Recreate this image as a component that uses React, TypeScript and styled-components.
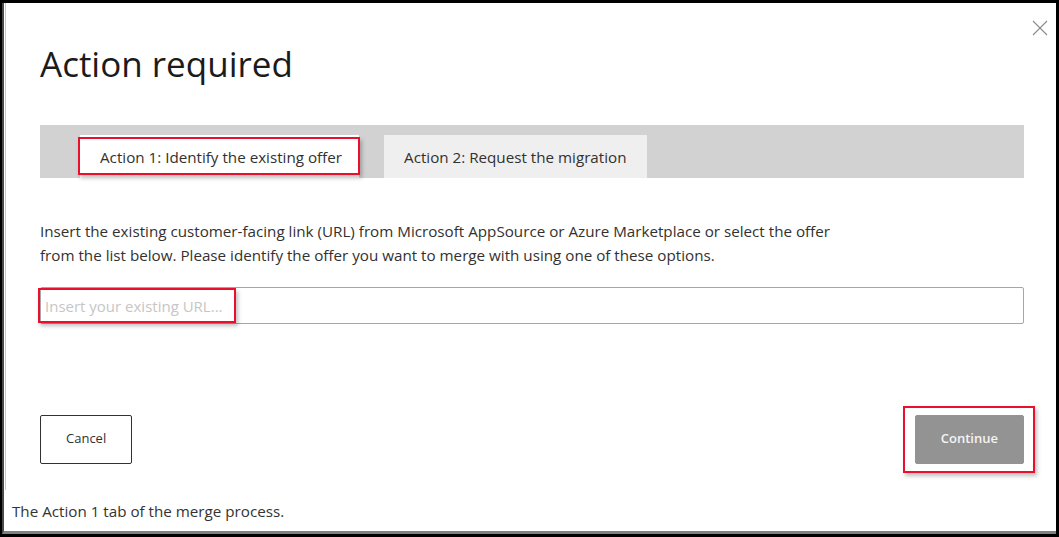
import React from "react";
import styled, { createGlobalStyle } from "styled-components";

const GlobalStyle = createGlobalStyle`
  html, body {
    margin: 0;
    padding: 0;
    background: #fff;
  }

  body {
    font-family: "Open Sans", "Noto Sans", "Liberation Sans", sans-serif;
    color: #323130;
  }
`;

const Frame = styled.div`
  width: 1059px;
  height: 537px;
  box-sizing: border-box;

  display: flex;

  border-style: solid;
  border-color: #000;
  border-width: 3px 3px 3px 2px;
  background: #fff;
  overflow: hidden;
`;

const Sheet = styled.div`
  flex: 1;

  display: flex;
  flex-direction: column;

  border-left: 2px solid #4a4a4a;
  border-bottom: 3px solid #808080;
`;

const Dialog = styled.section`
  position: relative;
  height: 487px;
  box-sizing: border-box;

  display: flex;
  flex-direction: column;

  margin-left: 1px;
  padding: 0 32px 26px 34px;

  border-left: 1px solid #cacaca;
`;

const CloseButton = styled.button`
  position: absolute;
  top: 17px;
  right: 8px;

  width: 16px;
  height: 16px;
  padding: 0;

  display: flex;

  border: none;
  background: none;
  color: #8a8a8a;
`;

const Title = styled.h1`
  margin: 39px 0 0;

  font-size: 35px;
  font-weight: 400;
  line-height: 44px;
  color: #1b1b1b;
`;

const TabBand = styled.div`
  height: 53px;
  box-sizing: border-box;

  display: flex;
  align-items: flex-end;
  gap: 25px;

  margin-top: 39px;
  padding-left: 40px;

  background: #d2d2d2;
`;

const Tab = styled.div<{ $active?: boolean }>`
  position: relative;
  height: 43px;
  box-sizing: border-box;

  display: flex;
  align-items: center;

  padding: 0 ${(p) => (p.$active ? "17px" : "20px")} 0 20px;

  font-size: 15.2px;
  color: #323130;
  background: ${(p) => (p.$active ? "#fff" : "#efefef")};
`;

const Highlight = styled.span<{
  $top: number;
  $right: number;
  $bottom: number;
  $left: number;
}>`
  position: absolute;
  top: ${(p) => p.$top}px;
  right: ${(p) => p.$right}px;
  bottom: ${(p) => p.$bottom}px;
  left: ${(p) => p.$left}px;

  box-sizing: border-box;
  border: 2px solid #e8112d;
  box-shadow: 2px 3px 4px rgba(0, 0, 0, 0.25);
  pointer-events: none;
`;

const Intro = styled.p`
  margin: 41px 0 0;

  font-size: 15.2px;
  line-height: 24px;
  color: #323130;
`;

const Field = styled.div`
  position: relative;
  margin-top: 20px;
`;

const UrlInput = styled.input`
  width: 100%;
  height: 37px;
  box-sizing: border-box;

  padding: 0 4px;

  font-family: inherit;
  font-size: 15px;
  color: #323130;

  border: 1px solid #a6a6a6;
  border-radius: 2px;
  outline: none;

  &::placeholder {
    color: #c6c6c6;
  }
`;

const Footer = styled.div`
  display: flex;
  justify-content: space-between;
  align-items: flex-start;

  margin-top: auto;
`;

const Button = styled.button<{ $primary?: boolean }>`
  position: relative;
  height: 49px;
  box-sizing: border-box;

  padding: 0 25px 3px;

  font-family: inherit;
  font-size: 13px;
  font-weight: ${(p) => (p.$primary ? 600 : 400)};
  color: ${(p) => (p.$primary ? "#f4f4f4" : "#323130")};

  border: 1px solid ${(p) => (p.$primary ? "#939393" : "#323130")};
  border-radius: 2px;
  background: ${(p) => (p.$primary ? "#939393" : "#fff")};
`;

const Caption = styled.div`
  flex: 1;

  display: flex;
  align-items: center;

  padding-left: 8px;

  font-size: 15.2px;
  color: #333;
`;

export default function App() {
  return (
    <>
      <GlobalStyle />
      <Frame>
        <Sheet>
          <Dialog>
            <CloseButton aria-label="Close">
              <svg width="16" height="16" viewBox="0 0 16 16">
                <path
                  d="M1 1 L15 15 M15 1 L1 15"
                  stroke="currentColor"
                  strokeWidth="1.1"
                  fill="none"
                />
              </svg>
            </CloseButton>
            <Title>Action required</Title>
            <TabBand>
              <Tab $active>
                Action 1: Identify the existing offer
                <Highlight $top={2} $right={-1} $bottom={3} $left={-2} />
              </Tab>
              <Tab>Action 2: Request the migration</Tab>
            </TabBand>
            <Intro>
              Insert the existing customer-facing link (URL) from Microsoft
              AppSource or Azure Marketplace or select the offer
              <br />
              from the list below. Please identify the offer you want to merge
              with using one of these options.
            </Intro>
            <Field>
              <UrlInput placeholder="Insert your existing URL..." />
              <Highlight $top={1} $right={788} $bottom={1} $left={-2} />
            </Field>
            <Footer>
              <Button>Cancel</Button>
              <Button $primary>
                Continue
                <Highlight $top={-10} $right={-12} $bottom={-10} $left={-13} />
              </Button>
            </Footer>
          </Dialog>
          <Caption>The Action 1 tab of the merge process.</Caption>
        </Sheet>
      </Frame>
    </>
  );
}
